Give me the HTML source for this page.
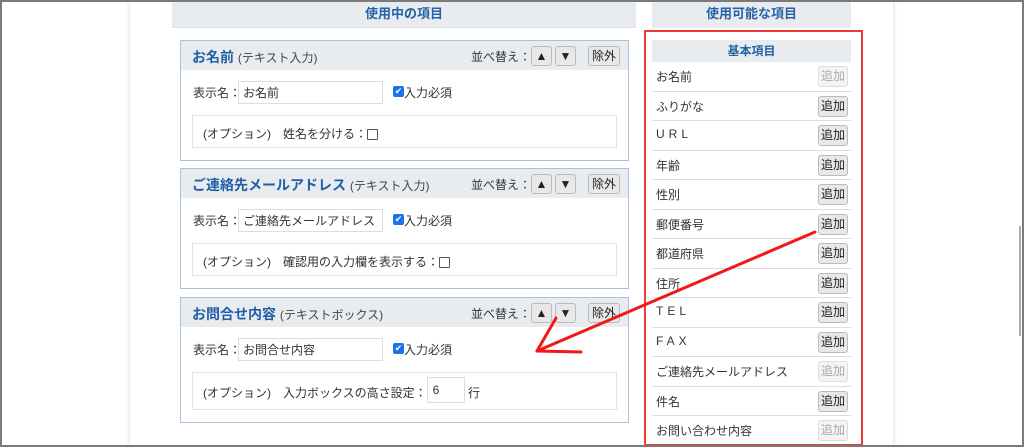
<!DOCTYPE html>
<html><head><meta charset="utf-8"><style>
*{box-sizing:border-box;margin:0;padding:0}
body{width:1024px;height:447px;overflow:hidden;background:#fff;font-family:"Liberation Sans","Noto Sans CJK JP",sans-serif;color:#333;font-size:12px;position:relative}
.frame{position:absolute;left:0;top:0;width:1024px;height:447px;border:2px solid #7a7a7a;border-bottom-width:2px}
.sh{position:absolute;top:0;height:447px;width:4px}
.a{position:absolute}
.hd{position:absolute;background:#e9ecef;color:#2563a6;font-weight:bold;font-size:13px;text-align:center}
.panel{position:absolute;left:180px;width:449px;border:1px solid #a9c1de;background:#fff}
.ph{position:absolute;left:0;top:0;right:0;height:29px;background:#e9ecef}
.pt{position:absolute;left:11px;top:6px;color:#1f5fa8;font-weight:bold;font-size:14px}
.pt span{color:#444;font-weight:normal;font-size:12px}
.sort{position:absolute;left:290px;top:7px;font-size:12px}
.btn{position:absolute;top:5px;height:20px;border:1px solid #bbb;border-radius:3px;background:#e8e8e8;font-size:12px;text-align:center;line-height:18px;color:#222}
.lbl{position:absolute;left:12px;top:43px;font-size:12px}
.inp{position:absolute;left:57px;top:40px;width:145px;height:23px;border:1px solid #ddd;font-size:12px;padding:4px 4px;line-height:14px}
.chk{position:absolute;left:212px;top:45px;width:11px;height:11px;background:#1a73e8;border-radius:2px;color:#fff;font-size:9px;line-height:11px;text-align:center}
.req{position:absolute;left:223px;top:43px}
.opt{position:absolute;left:11px;top:74px;width:425px;height:33px;border:1px solid #e2e2e2;padding:9px 10px;font-size:12px}
.cb{display:inline-block;width:11px;height:11px;border:1px solid #555;border-radius:1px;vertical-align:-2px}
.row{position:absolute;left:652px;width:199px;height:29.5px;border-bottom:1px solid #ddd;font-size:12px}
.row .t{position:absolute;left:4px;top:6px}
.row .b{position:absolute;left:166px;top:4px;width:30px;height:21px;border:1px solid #bbb;border-radius:3px;background:#e8e8e8;font-size:12px;text-align:center;line-height:19px;color:#222}
.row .b.d{background:#f4f4f4;border-color:#ddd;color:#aaa}
</style></head><body>
<div class="sh" style="left:126px;background:linear-gradient(90deg,#fff,#eee)"></div>
<div class="sh" style="left:893px;background:linear-gradient(90deg,#eee,#fff)"></div>
<div class="a" style="left:1019px;top:226px;width:2px;height:110px;background:#aaa"></div>

<div class="hd" style="left:172px;top:0;width:464px;height:28px;line-height:28px;border-bottom:1px solid #dde">使用中の項目</div>
<div class="hd" style="left:652px;top:0;width:199px;height:28px;line-height:28px">使用可能な項目</div>

<div class="panel" style="top:40px;height:121px">
<div class="ph"><div class="pt">お名前 <span>(テキスト入力)</span></div><div class="sort">並べ替え：</div>
<div class="btn" style="left:350px;width:21px">▲</div><div class="btn" style="left:374px;width:21px">▼</div><div class="btn" style="left:407px;width:32px">除外</div></div>
<div class="lbl">表示名：</div><div class="inp">お名前</div><div class="chk">✔</div><div class="req">入力必須</div>
<div class="opt">(オプション)　姓名を分ける：<span class="cb"></span></div>
</div>

<div class="panel" style="top:168px;height:121px">
<div class="ph"><div class="pt">ご連絡先メールアドレス <span>(テキスト入力)</span></div><div class="sort">並べ替え：</div>
<div class="btn" style="left:350px;width:21px">▲</div><div class="btn" style="left:374px;width:21px">▼</div><div class="btn" style="left:407px;width:32px">除外</div></div>
<div class="lbl">表示名：</div><div class="inp">ご連絡先メールアドレス</div><div class="chk">✔</div><div class="req">入力必須</div>
<div class="opt">(オプション)　確認用の入力欄を表示する：<span class="cb"></span></div>
</div>

<div class="panel" style="top:297px;height:126px">
<div class="ph"><div class="pt">お問合せ内容 <span>(テキストボックス)</span></div><div class="sort">並べ替え：</div>
<div class="btn" style="left:350px;width:21px">▲</div><div class="btn" style="left:374px;width:21px">▼</div><div class="btn" style="left:407px;width:32px">除外</div></div>
<div class="lbl">表示名：</div><div class="inp">お問合せ内容</div><div class="chk">✔</div><div class="req">入力必須</div>
<div class="opt" style="height:38px;padding-top:11px">(オプション)　入力ボックスの高さ設定：<span style="display:inline-block;width:38px;height:26px;border:1px solid #ddd;vertical-align:middle;margin-top:-8px;padding:6px 5px;line-height:12px">6</span> 行</div>
</div>

<div class="a" style="left:644px;top:30px;width:219px;height:416px;border:2px solid #f03a3a"></div>
<div class="hd" style="left:652px;top:40px;width:199px;height:22px;line-height:22px;font-size:12px">基本項目</div>
<div class="row" style="top:62px"><div class="t">お名前</div><div class="b d">追加</div></div>
<div class="row" style="top:91.5px"><div class="t">ふりがな</div><div class="b">追加</div></div>
<div class="row" style="top:121px"><div class="t" style="letter-spacing:4px">URL</div><div class="b">追加</div></div>
<div class="row" style="top:150.5px"><div class="t">年齢</div><div class="b">追加</div></div>
<div class="row" style="top:180px"><div class="t">性別</div><div class="b">追加</div></div>
<div class="row" style="top:209.5px"><div class="t">郵便番号</div><div class="b">追加</div></div>
<div class="row" style="top:239px"><div class="t">都道府県</div><div class="b">追加</div></div>
<div class="row" style="top:268.5px"><div class="t">住所</div><div class="b">追加</div></div>
<div class="row" style="top:298px"><div class="t" style="letter-spacing:4px">TEL</div><div class="b">追加</div></div>
<div class="row" style="top:327.5px"><div class="t" style="letter-spacing:4px">FAX</div><div class="b">追加</div></div>
<div class="row" style="top:357px"><div class="t">ご連絡先メールアドレス</div><div class="b d">追加</div></div>
<div class="row" style="top:386.5px"><div class="t">件名</div><div class="b">追加</div></div>
<div class="row" style="top:416px;border-bottom:none"><div class="t">お問い合わせ内容</div><div class="b d">追加</div></div>

<svg class="a" style="left:0;top:0" width="1024" height="447"><g stroke="#f01818" stroke-width="3" stroke-linecap="round" fill="none">
<line x1="815" y1="232" x2="537" y2="351"/><line x1="537" y1="351" x2="556" y2="318"/><line x1="537" y1="351" x2="581" y2="352"/></g></svg>
<div class="frame"></div>
</body></html>
